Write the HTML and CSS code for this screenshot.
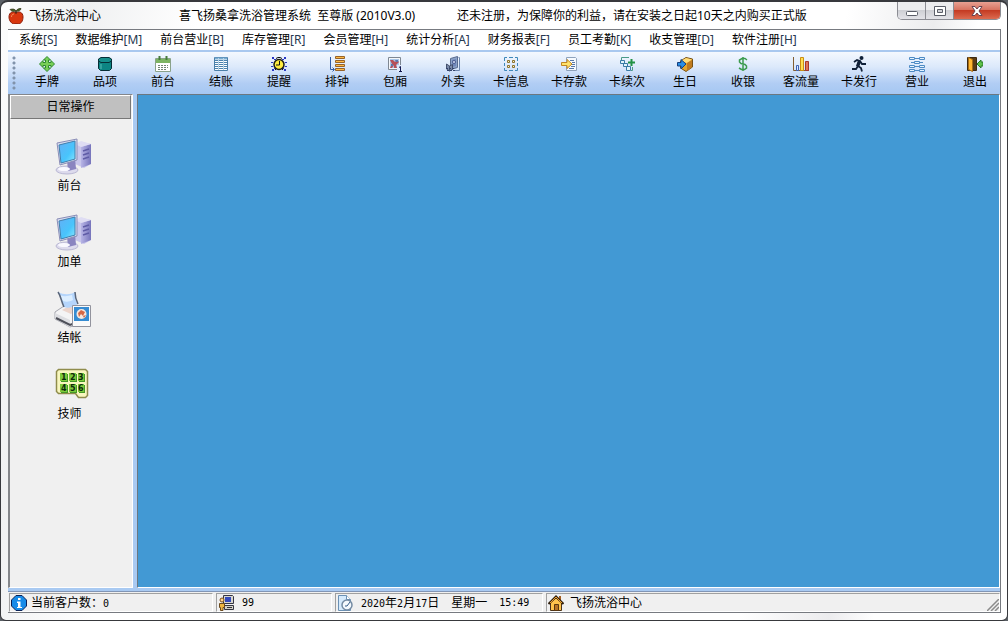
FILE: index.html
```
<!DOCTYPE html>
<html lang="zh-CN">
<head>
<meta charset="utf-8">
<title>飞扬洗浴中心</title>
<link rel="stylesheet" href="styles.css">
</head>
<body>
<div class="window">
  <header class="titlebar">
    <svg class="app-icon" viewBox="0 0 16 16"><path d="M8 5C5 3 1 4 1 9c0 4 3 7 5 7 1 0 1-.5 2-.5s1 .5 2 .5c3 0 5-3 5-7 0-5-4-6-7-4z" fill="#d8370f" stroke="#8e1c08"/><path d="M8 5.500V3" stroke="#442210" stroke-width="1.500"/><path d="M8 3C5 4 3 3 2 1.500 5 .5 7 1 8 3zM8 3c1-2 4-3 5-2.500C13 2.500 10 4 8 3z" fill="#48662b" stroke="#3b3520" stroke-width=".7"/><path d="M3.500 9c0-2 1-3 2.500-3" stroke="#f58a58" fill="none"/></svg>
    <h1 class="app-name">飞扬洗浴中心</h1>
    <span class="edition">喜飞扬桑拿洗浴管理系统&nbsp; 至尊版 (2010V3.0)</span>
    <span class="notice">还未注册，为保障你的利益，请在安装之日起10天之内购买正式版</span>
    <div class="controls">
      <button class="control" aria-label="最小化"><svg viewBox="0 0 14 12"><rect x="1.500" y="6.500" width="11" height="4" rx="1" fill="#fff" stroke="#5b5e68"/></svg></button>
      <button class="control" aria-label="最大化"><svg viewBox="0 0 14 12"><path d="M1.500 1.500h11v9h-11zM4.500 4.500v3h5v-3z" fill="#fff" fill-rule="evenodd" stroke="#5b5e68"/></svg></button>
      <button class="control control-close" aria-label="关闭"><svg viewBox="0 0 14 12"><path d="M2 1.500h3l2 2.500 2-2.500h3L9 6l3 4.500H9L7 8l-2 2.500H2L5 6z" fill="#fff" stroke="#6b4350"/></svg></button>
    </div>
  </header>

  <div class="client">
    <nav class="menu">
      <button>系统<span>[S]</span></button>
      <button>数据维护<span>[M]</span></button>
      <button>前台营业<span>[B]</span></button>
      <button>库存管理<span>[R]</span></button>
      <button>会员管理<span>[H]</span></button>
      <button>统计分析<span>[A]</span></button>
      <button>财务报表<span>[F]</span></button>
      <button>员工考勤<span>[K]</span></button>
      <button>收支管理<span>[D]</span></button>
      <button>软件注册<span>[H]</span></button>
    </nav>

    <div class="toolbar">
      <span class="grip"></span>
      <button class="tool"><svg viewBox="0 0 16 16"><path d="M8 .5l3.500 3.500H9.500v2.500H12V4.500L15.500 8 12 11.500V9.500H9.500V12h2L8 15.500 4.500 12h2V9.500H4v2L.5 8 4 4.500v2h2.500V4h-2z" fill="#79cf58" stroke="#2e8a2c"/></svg>手牌</button>
      <button class="tool"><svg viewBox="0 0 16 16"><path d="M1.500 4v8.500l2 2h9l2-2V4z" fill="#0c8583" stroke="#062e36"/><path d="M4 1.500h8l2.500 1.500v2L12 6.500H4L1.500 5V3z" fill="#168f8c" stroke="#062e36"/><path d="M4 8v5" stroke="#5ac0b8"/></svg>品项</button>
      <button class="tool"><svg viewBox="0 0 16 16"><path d="M.5 2.500h15v13H.5z" fill="#fff" stroke="#8aa28a"/><path d="M1 3h14v4H1z" fill="#7db462"/><path d="M4.500 0v4M11.500 0v4" stroke="#477c3b" stroke-width="2"/><path d="M3 9.500h10M3 11.500h10M3 13.500h8" stroke="#728373" stroke-dasharray="2 1"/></svg>前台</button>
      <button class="tool"><svg viewBox="0 0 16 16"><path d="M1.500 1.500h13v13h-13z" fill="#fff" stroke="#4b7fa9"/><path d="M2 4.500h12M2 6.500h12M2 8.500h12M2 10.500h12M2 12.500h12" stroke="#4d83ae"/><path d="M2 2.500h12" stroke="#78acd2" stroke-width="2"/><path d="M5.500 2v12M10.500 2v12" stroke="#b8d4e8"/></svg>结账</button>
      <button class="tool"><svg viewBox="0 0 16 16"><path d="M1 1h2v2h2v1H3V3H1zM15 1h-2v2h-2v1h2V3h2zM1 15h2v-2h2v-1H3v1H1zM15 15h-2v-2h-2v-1h2v1h2zM0 6h2v1H0zM14 6h2v1h-2zM0 10h2v1H0zM14 10h2v1h-2z" fill="#2835c1"/><circle cx="8" cy="8.500" r="5" fill="#ffec3f" stroke="#1e1d11" stroke-width="1.500"/><path d="M8.500 5v4H5M5 2.500l2-1h2l2 1M4 14l1-1M12 14l-1-1" fill="none" stroke="#111"/></svg>提醒</button>
      <button class="tool"><svg viewBox="0 0 16 16"><path d="M1.500 1v12.500H5M3.500 11.500l2 2-2 2" fill="none" stroke="#315ba5"/><g fill="#ffba45" stroke="#976329"><path d="M6.500.5h9v2h-9zM6.500 4.500h9v2h-9zM6.500 8.500h9v2h-9zM6.500 12.500h9v2h-9z"/></g></svg>排钟</button>
      <button class="tool"><svg viewBox="0 0 16 16"><path d="M1.500 1.500h12v12h-12z" fill="#f5f7fa" stroke="#7f8893"/><path d="M3 3h9v9H3z" fill="#a9c6e8"/><path d="M3 4h3l2 2 2-2 2 2-3 3 1 3H7V9L5 12H3l2-4z" fill="#b75058"/><path d="M8 4h3v2H9zM4 8h2v2H4z" fill="#5f76a8"/><path d="M10 9h6v7h-6z" fill="#dfeafb"/><path d="M12 11.500l1.500-1v5M12 15.500h3" fill="none" stroke="#111850"/></svg>包厢</button>
      <button class="tool"><svg viewBox="0 0 16 16"><path d="M5.500 2.500l7-2v11l-7 2z" fill="#8ba2c8" stroke="#5a6c90"/><path d="M13.500 1.500h1v13H8" fill="none" stroke="#6d86ad"/><path d="M7 4l4-1v7l-4 1z" fill="#6f87ba"/><circle cx="9" cy="6" r="1.500" fill="#dce8ff" stroke="#4b5a8c"/><path d="M1.500 8l3 2v5l-3-2zM4.500 10l3-1.500v5L4.500 15z" fill="#7b8bab" stroke="#44516e"/><path d="M1 12.500h9M2 14.500h9" stroke="#34446c" stroke-dasharray="2 1"/></svg>外卖</button>
      <button class="tool"><svg viewBox="0 0 16 16"><path d="M4 1.500H1.500V5M12 1.500h2.500V5M1.500 7v3M14.500 7v3M4 14.500H1.500V12M12 14.500h2.500V12M6 1.500h4M6 14.500h4" fill="none" stroke="#3e88ba"/><g fill="#fff2ca" stroke="#8a722c"><path d="M4.500 4.500h2v2h-2zM9.500 4.500h2v2h-2zM4.500 9.500h2v2h-2zM9.500 9.500h2v2h-2z"/></g></svg>卡信息</button>
      <button class="tool"><svg viewBox="0 0 16 16"><path d="M5.500 1.500h9l1 1v12h-10z" fill="#f6faff" stroke="#8fa3bc"/><path d="M9 4.500h4M11 6.500h3M11 8.500h3M10 10.500h4M8 12.500h5" stroke="#5879a7"/><path d="M.5 6.500H6v-3L11 8l-5 4.500v-3H.5z" fill="#ffe36c" stroke="#c28622"/></svg>卡存款</button>
      <button class="tool"><svg viewBox="0 0 16 16"><path d="M2.500 4V1.500H10M13.500 11v3.500H12" fill="none" stroke="#4a9a87"/><g fill="#e2f4fa" stroke="#397ba5"><path d="M1.500 4.500h4v3h-4zM4.500 7.500h4v3h-4zM7.500 10.500h4v4h-4z"/></g><path d="M12.500 3v7M9 6.500h7" stroke="#239245" stroke-width="2"/></svg>卡续次</button>
      <button class="tool"><svg viewBox="0 0 16 16"><path d="M3.500 5L9 1.500 15.500 3v8L9 15.500 3.500 12z" fill="#e4a52d" stroke="#765116"/><path d="M4 5l5-3 6 1.500L10 7z" fill="#ffdc78"/><path d="M10 7v8l5-4V4z" fill="#bf7b20"/><path d="M.5 6.500H4v-3L9 8l-5 5v-3H.5z" fill="#288ee5" stroke="#163f7d"/></svg>生日</button>
      <button class="tool"><svg viewBox="0 0 16 16"><path d="M12 4L10 2.500H7L4.500 4v2L6 7.500l4 1 1.500 1.500v2L9.500 13.500H6.500L4 12M8 1v14" fill="none" stroke="#3b9b4d" stroke-width="1.500"/></svg>收银</button>
      <button class="tool"><svg viewBox="0 0 16 16"><path d="M.5 1v13.500H16" fill="none" stroke="#835e32"/><path d="M3.500 9.500h2v5h-2z" fill="#dbe7ff" stroke="#3c62b4"/><path d="M7.500 1.500h3v13h-3z" fill="#ffe052" stroke="#cb8d12"/><path d="M12.500 5.500h3v9h-3z" fill="#e27756" stroke="#a43832"/></svg>客流量</button>
      <button class="tool"><svg viewBox="0 0 16 16"><circle cx="10.500" cy="2" r="2" fill="#102139"/><path d="M3 6l3-2 3 1-2 5 3 2 1 3.500M7 10l-2 3H1M9 5l2 3h4" fill="none" stroke="#102139" stroke-width="1.800"/><path d="M7 4l3 2-2 5-3-1z" fill="#102139"/></svg>卡发行</button>
      <button class="tool"><svg viewBox="0 0 16 16"><g fill="#e5f3ff" stroke="#4e8bc4"><path d="M.5 1.500h5v2h-5zM10.500 1.500h5v2h-5zM5.500 5.500h5v2h-5zM.5 9.500h5v2h-5zM10.500 9.500h5v2h-5zM.5 13.500h5v2h-5zM10.500 13.500h5v2h-5z"/><path d="M5.500 2.500h5M2 6.500h3.500M10.500 6.500H14M5.500 10.500h5M5.500 14.500h5"/></g></svg>营业</button>
      <button class="tool"><svg viewBox="0 0 16 16"><path d="M.5 1.500h9v13h-9z" fill="#593c16" stroke="#3e2a12"/><path d="M1.500 1.500l4 2v12l-4-2z" fill="#ffb730" stroke="#a76b14"/><path d="M16 6h-2V4l-4 4 4 4v-2h2z" fill="#5ec249" stroke="#287b26"/></svg>退出</button>
    </div>

    <main class="workspace">
      <aside class="sidebar">
        <button class="sidebar-title">日常操作</button>
        <div class="shortcuts">
          <button class="shortcut"><svg viewBox="0 0 38 38"><use href="#pc"/></svg>前台</button>
          <button class="shortcut"><svg viewBox="0 0 38 38"><use href="#pc"/></svg>加单</button>
          <button class="shortcut"><svg viewBox="0 0 38 38">
            <path d="M1 22l9-6 18 3 5 4v7l-17 7-15-8z" fill="#f4f4f5" stroke="#a5a6ae"/><path d="M1 23l15 7v7L1 29z" fill="#dcdde1"/><path d="M2 28l14 7 5-2" fill="none" stroke="#4d4f58" stroke-width="2"/><path d="M8 20l9-5 10 3-10 6z" fill="#ecd5cc"/>
            <path d="M4 2c3 4 3 9 6 15 4 2 9 0 14-3-3-4-3-9-3-12-5 3-11 3-17 0z" fill="#b5d5fb"/><path d="M6 5c4 2 8 1 12 0l1 5c-4 2-7 2-10 1z" fill="#dceeff"/><path d="M4 2c3 4 3 9 6 15M21 2c0 4 1 8 3 12" fill="none" stroke="#596579" stroke-width="1.500"/>
            <path d="M18.500 15.500h18v21h-18z" fill="#fafafa" stroke="#92939d"/><path d="M20 17h15v14H20z" fill="#368cd2"/><circle cx="27.500" cy="24" r="5" fill="#f8e9df"/><path d="M24 23l3-3 4 2-2 4-2-2-2 3zM29 26l3-1-2 3z" fill="#d66845"/></svg>结帐</button>
          <button class="shortcut"><svg viewBox="0 0 38 38">
            <path d="M4.500 3.500h27l2 2v24l-2 2h-7l-3-4h-17l-2-2v-20z" fill="#f8f7be" stroke="#8f8c4c" stroke-width="1.500"/>
            <g fill="#449827"><path d="M7 8h7v8H7zM16 8h7v8h-7zM25 8h6v8h-6zM7 19h7v8H7zM16 19h7v8h-7zM25 19h6v8h-6z"/></g>
            <g fill="#7ecb3b"><path d="M6 7h7v8H6zM15 7h7v8h-7zM24 7h6v8h-6zM6 18h7v8H6zM15 18h7v8h-7zM24 18h6v8h-6z"/></g>
            <g class="key-digits"><text x="7" y="14">1</text><text x="16" y="14">2</text><text x="24" y="14">3</text><text x="7" y="25">4</text><text x="16" y="25">5</text><text x="24" y="25">6</text></g></svg>技师</button>
        </div>
      </aside>
      <section class="canvas" aria-label="工作区"></section>
    </main>

    <footer class="status">
      <div class="panel panel-customers"><svg viewBox="0 0 16 16"><path d="M5 .5h6L15.500 5v6L11 15.500H5L.5 11V5z" fill="#168be8" stroke="#0a2257"/><path d="M7 3h2.500v2H7zM6 6.500h3.500V12H11v1H6v-1h1V8H6z" fill="#fff"/></svg><span>当前客户数：<b>0</b></span></div>
      <div class="panel panel-users"><svg viewBox="0 0 16 16"><path d="M5.500.5h9l1 1v7h-10z" fill="#d7d6d0" stroke="#343540"/><path d="M7 2h6v5H7z" fill="#334abd"/><path d="M6.500 10.500h9v4h-9z" fill="#d4d2ca" stroke="#343540"/><path d="M9 12.500h5" stroke="#333"/><circle cx="4" cy="5" r="2" fill="#ffd58d" stroke="#785021"/><path d="M1.500 8.500h5v4H5v3H2.500v-3h-1z" fill="#efb641" stroke="#6b4a1f"/></svg><b>99</b></div>
      <div class="panel panel-date"><svg viewBox="0 0 16 16"><path d="M1.500.5h8l4 4v11h-12z" fill="#d5eafc" stroke="#6b91b5"/><path d="M9.500.5v4h4" fill="#fff" stroke="#6b91b5"/><circle cx="10" cy="10" r="5" fill="#f4f9fd" stroke="#748ba3" stroke-width="1.500"/><path d="M10 11l3-4M10 11H8" stroke="#335b87"/></svg><span class="date"><span><b>2020</b>年<b>2</b>月<b>17</b>日</span><span>星期一</span><b>15:49</b></span></div>
      <div class="panel panel-site"><svg viewBox="0 0 16 16"><path d="M11 1h2v4h-2z" fill="#a65e20"/><path d="M2.500 7.500L8 3l5.500 4.500v8h-11z" fill="#ffc34c" stroke="#4c3217"/><path d="M.5 9L8 1.500 15.500 9" fill="none" stroke="#31200f" stroke-width="2"/><path d="M2 8l6-6 6 6" fill="none" stroke="#f1a02b"/><path d="M6.500 9.500h4v6h-4z" fill="#b77325" stroke="#59370f"/></svg><span>飞扬洗浴中心</span><svg class="resize" viewBox="0 0 12 12"><path d="M0 12L12 0M4 12l8-8M8 12l4-4" stroke="#8b8b8b" stroke-width="1.500"/></svg></div>
    </footer>
  </div>
</div>

<svg class="defs" aria-hidden="true">
  <defs>
    <linearGradient id="screen" x2="1" y2="1"><stop stop-color="#64aef5"/><stop offset=".6" stop-color="#48c5fc"/><stop offset="1" stop-color="#8ae8ff"/></linearGradient>
    <linearGradient id="tower"><stop stop-color="#b8b5e6"/><stop offset="1" stop-color="#7674bb"/></linearGradient>
    <g id="pc">
      <path d="M21 7l6-3 10 2v20l-7 4-9-4z" fill="#c8c6eb"/><path d="M27 9l10-3v20l-10 4z" fill="url(#tower)"/><path d="M21 6l6-3 10 3-10 3z" fill="#dfddf3"/><path d="M29 13l6-2M29 17l6-2M29 21l6-2" stroke="#5f5ca6" stroke-width="1.500"/>
      <ellipse cx="13" cy="32" rx="11" ry="4" fill="#dddbed" stroke="#b9b7d3"/><path d="M13 22l8-2 1 11-8 2z" fill="#8a85c0"/><ellipse cx="10" cy="31" rx="6" ry="2" fill="#f9f8ff"/>
      <path d="M3 5l20-4v21L6 27z" fill="#d6dbee" stroke="#8b8eb7"/><path d="M5 7l16-4v18L7 25z" fill="url(#screen)" stroke="#407fae"/>
    </g>
  </defs>
</svg>
</body>
</html>
```

FILE: styles.css
```
* { box-sizing: border-box; }

body {
  margin: 0;
  background: #5b6066;
  color: #000;
  font: 12px/16px "Noto Sans", "Noto Sans CJK SC", sans-serif;
}

button {
  margin: 0;
  padding: 0;
  border: 0;
  background: none;
  color: inherit;
  font: inherit;
}

svg { display: block; flex: none; }
.defs { position: absolute; width: 0; height: 0; }

.window {
  display: flex;
  flex-direction: column;
  min-height: 100vh;
  padding: 0 6px 7px 7px;
  border: 1px solid #38393d;
  border-top-width: 2px;
  border-radius: 8px 8px 6px 6px;
  background: linear-gradient(100deg, #fdfdfd 0, #f0f1f2 8%, #fff 18%, #fff 76%, #ececee 84%, #fff 88%);
}

.titlebar {
  display: flex;
  align-items: center;
  height: 27px;
}
.app-icon { width: 16px; height: 16px; }
.app-name {
  width: 150px;
  margin: 0 0 0 5px;
  font-size: 12px;
  font-weight: 400;
}
.edition { width: 278px; white-space: nowrap; }
.notice { white-space: nowrap; }

.controls {
  display: flex;
  align-self: flex-start;
  margin-left: auto;
  border: 1px solid #8b8c93;
  border-top: 0;
  border-radius: 0 0 5px 5px;
  overflow: hidden;
}
.control {
  display: grid;
  place-items: center;
  width: 28px;
  height: 17px;
  border-right: 1px solid #8b8c93;
  background: linear-gradient(#ececee 0 45%, #cfd0d5 50%, #e3e3e8);
}
.control svg { width: 14px; height: 12px; }
.control-close {
  width: 46px;
  border-right: 0;
  background: linear-gradient(#e8a092 0, #d97461 45%, #c43b23 50%, #dc6b50);
}

.client {
  display: flex;
  flex: 1;
  flex-direction: column;
  border: 1px solid #777a80;
  border-left: 0;
  background: #a9caf2;
}

.menu {
  display: flex;
  gap: 18px;
  height: 20px;
  padding-left: 11px;
  background: #fff;
}
.menu button { white-space: nowrap; }
.menu span { color: #26384f; }

.toolbar {
  display: flex;
  height: 44px;
  padding: 4px 0 0 4px;
  border-top: 2px solid #a9c8ef;
  background: linear-gradient(#f4f8fe, #dce9fb 35%, #b1cdf4 75%, #a5c7f2);
  overflow: hidden;
}
.grip {
  flex: none;
  width: 6px;
  height: 34px;
  background: radial-gradient(circle at 2px 2px, #8193ab 1px, transparent 2px) 0 0 / 6px 5px;
}
.tool {
  display: flex;
  flex: 0 0 58px;
  flex-direction: column;
  align-items: center;
  gap: 2px;
  white-space: nowrap;
}
.tool svg { width: 16px; height: 16px; }

.workspace {
  display: flex;
  flex: 1;
  gap: 4px;
}
.sidebar {
  width: 125px;
  border: 1px solid #84868a;
  border-left-width: 2px;
  border-right-color: #fff;
  border-bottom-color: #fff;
  background: #f0f0f0;
}
.sidebar-title {
  display: block;
  width: calc(100% - 1px);
  height: 24px;
  border: 1px solid #fff;
  border-right-color: #777;
  border-bottom-color: #777;
  background: #c0c0c0;
}
.shortcuts {
  display: flex;
  flex-direction: column;
  align-items: center;
  gap: 20px;
  padding: 19px 3px 0 0;
}
.shortcut {
  display: flex;
  flex-direction: column;
  align-items: center;
  gap: 2px;
}
.shortcut svg { width: 38px; height: 38px; margin-left: 6px; }
.key-digits { font: bold 8px "DejaVu Sans", sans-serif; fill: #0d2b0b; }

.canvas {
  flex: 1;
  border: 1px solid #fff;
  border-top-color: #6b7780;
  border-left: 1px solid #6b7780;
  background: #4299d4;
}

.status {
  display: flex;
  gap: 3px;
  margin-top: 3px;
  padding: 1px 0 0 1px;
  border-top: 1px solid #8195b5;
  background: #f0f0f0;
}
.panel {
  display: flex;
  align-items: center;
  gap: 4px;
  height: 19px;
  padding-left: 1px;
  border: 1px solid #a0a0a0;
  border-right-color: #fff;
  border-bottom-color: #fff;
  white-space: nowrap;
}
.panel > span { padding-top: 1px; }
.panel svg { width: 16px; height: 16px; }
.panel b { font: 10px/16px "DejaVu Sans Mono", monospace; }
.panel-customers { width: 204px; }
.panel-users { width: 116px; gap: 8px; }
.panel-date { width: 208px; gap: 8px; }
.panel-site { flex: 1; gap: 6px; }
.date { display: flex; gap: 12px; }
.panel .resize { align-self: flex-end; width: 12px; height: 12px; margin-left: auto; }
```
